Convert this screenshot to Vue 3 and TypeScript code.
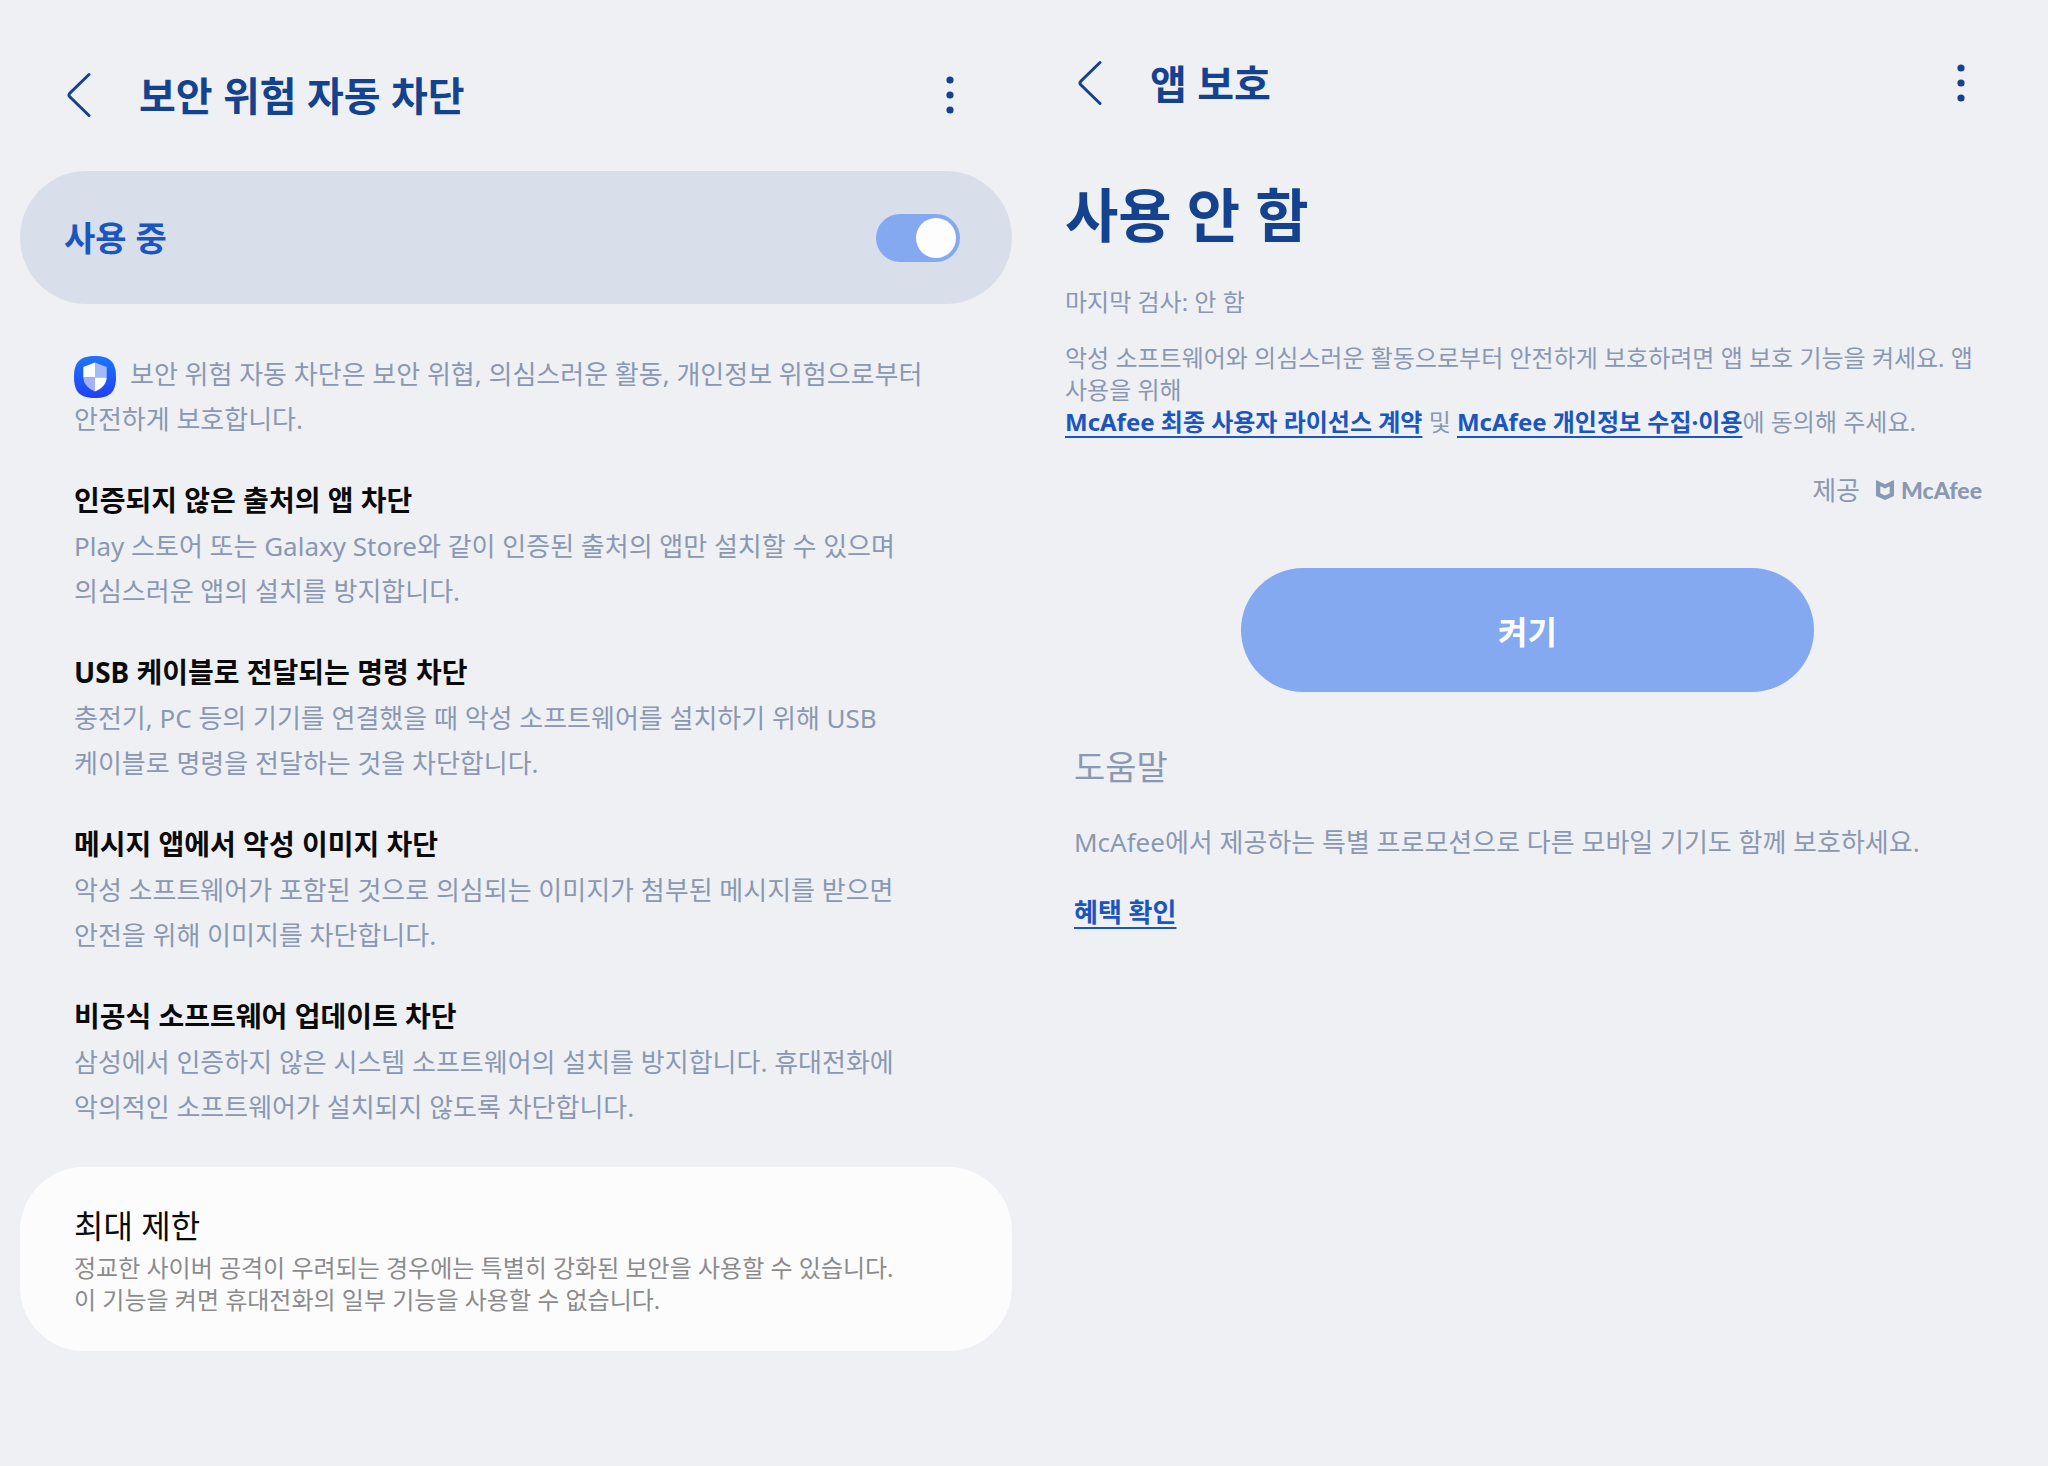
<script setup lang="ts">
import { ref } from 'vue'

interface Rule {
  title: string
  text: string
}

const autoBlock = ref<boolean>(true)

const rules: Rule[] = [
  {
    title: '인증되지 않은 출처의 앱 차단',
    text: 'Play 스토어 또는 Galaxy Store와 같이 인증된 출처의 앱만 설치할 수 있으며 의심스러운 앱의 설치를 방지합니다.',
  },
  {
    title: 'USB 케이블로 전달되는 명령 차단',
    text: '충전기, PC 등의 기기를 연결했을 때 악성 소프트웨어를 설치하기 위해 USB 케이블로 명령을 전달하는 것을 차단합니다.',
  },
  {
    title: '메시지 앱에서 악성 이미지 차단',
    text: '악성 소프트웨어가 포함된 것으로 의심되는 이미지가 첨부된 메시지를 받으면 안전을 위해 이미지를 차단합니다.',
  },
  {
    title: '비공식 소프트웨어 업데이트 차단',
    text: '삼성에서 인증하지 않은 시스템 소프트웨어의 설치를 방지합니다. 휴대전화에 악의적인 소프트웨어가 설치되지 않도록 차단합니다.',
  },
]
</script>

<template>
  <main class="screens">
    <section class="pane blocker">
      <header class="bar">
        <button class="icon-button" type="button" aria-label="뒤로">
          <svg width="24" height="48" viewBox="0 0 24 48">
            <path d="M22 2.500 2.800 21.200Q1.200 23 2.800 24.800L22 43.500" />
          </svg>
        </button>
        <h1>보안 위험 자동 차단</h1>
        <button class="icon-button more" type="button" aria-label="더보기">
          <svg width="8" height="40" viewBox="0 0 8 40">
            <circle cx="4" cy="4" r="3.600" />
            <circle cx="4" cy="19" r="3.600" />
            <circle cx="4" cy="34" r="3.600" />
          </svg>
        </button>
      </header>

      <label class="switch-row">
        <span>사용 중</span>
        <input v-model="autoBlock" type="checkbox" role="switch" />
      </label>

      <div class="details">
        <p class="intro">
          <svg class="shield" width="42" height="42" viewBox="0 0 42 42" aria-hidden="true">
            <defs>
              <linearGradient id="shield-tile" x1="0" y1="0" x2="0" y2="1">
                <stop offset="0" stop-color="#1c76fb" />
                <stop offset="1" stop-color="#2140f4" />
              </linearGradient>
            </defs>
            <path
              d="M21 0C36 0 42 6 42 21S36 42 21 42 0 36 0 21 6 0 21 0Z"
              fill="url(#shield-tile)"
            />
            <path d="M21 6.500 9.300 11v10.500H21Z" fill="#fff" />
            <path d="M21 6.500 32.700 11v10.500H21Z" fill="#a3bafa" />
            <path d="M9.300 21.500H21v14C14 32.500 9.600 28 9.300 21.500Z" fill="#a3b2fb" />
            <path d="M32.700 21.500H21v14C28 32.500 32.400 28 32.700 21.500Z" fill="#fff" />
          </svg>보안 위험 자동 차단은 보안 위협, 의심스러운 활동, 개인정보 위험으로부터 안전하게 보호합니다.
        </p>

        <article v-for="rule in rules" :key="rule.title" class="rule">
          <h2>{{ rule.title }}</h2>
          <p>{{ rule.text }}</p>
        </article>
      </div>

      <section class="limit-card">
        <h2>최대 제한</h2>
        <p>
          정교한 사이버 공격이 우려되는 경우에는 특별히 강화된 보안을 사용할 수 있습니다.<br />
          이 기능을 켜면 휴대전화의 일부 기능을 사용할 수 없습니다.
        </p>
      </section>
    </section>

    <section class="pane protection">
      <header class="bar">
        <button class="icon-button" type="button" aria-label="뒤로">
          <svg width="24" height="48" viewBox="0 0 24 48">
            <path d="M22 2.500 2.800 21.200Q1.200 23 2.800 24.800L22 43.500" />
          </svg>
        </button>
        <h1>앱 보호</h1>
        <button class="icon-button more" type="button" aria-label="더보기">
          <svg width="8" height="40" viewBox="0 0 8 40">
            <circle cx="4" cy="4" r="3.600" />
            <circle cx="4" cy="19" r="3.600" />
            <circle cx="4" cy="34" r="3.600" />
          </svg>
        </button>
      </header>

      <h2 class="status">사용 안 함</h2>
      <p class="small last-scan">마지막 검사: 안 함</p>
      <p class="small">
        악성 소프트웨어와 의심스러운 활동으로부터 안전하게 보호하려면 앱 보호 기능을 켜세요. 앱 사용을 위해<br />
        <a href="#license">McAfee 최종 사용자 라이선스 계약</a> 및
        <a href="#privacy">McAfee 개인정보 수집·이용</a>에 동의해 주세요.
      </p>

      <div class="provider">
        <span>제공</span>
        <span class="mcafee">
          <svg width="18" height="20" viewBox="0 0 18 20" aria-hidden="true">
            <path
              d="M0 0 9 4.200 18 0V16L9 20 0 16ZM4.300 6.300V13.300L9 15.500 13.700 13.300V6.300L9 8.500Z"
              fill-rule="evenodd"
            />
          </svg>
          <span class="wordmark">McAfee</span>
        </span>
      </div>

      <button class="turn-on" type="button">켜기</button>

      <div class="help">
        <h3>도움말</h3>
        <p>McAfee에서 제공하는 특별 프로모션으로 다른 모바일 기기도 함께 보호하세요.</p>
        <a href="#benefit">혜택 확인</a>
      </div>
    </section>
  </main>
</template>

<style>
body {
  margin: 0;
  background: #eef0f4;
}
</style>

<style scoped>
.screens {
  display: grid;
  grid-template-columns: 1fr 1fr;
  box-sizing: border-box;
  min-height: 100vh;
  background: #eef0f4;
  color: #8a98b1;
  font-family: 'Noto Sans', 'Noto Sans CJK KR', sans-serif;
  word-break: keep-all;
}

h1,
h2,
h3,
p {
  margin: 0;
}

.pane {
  min-width: 0;
}

.blocker {
  padding: 48px 12px 48px 20px;
}

.protection {
  padding: 36px 58px 48px 41px;
}

.bar {
  display: flex;
  align-items: center;
  height: 96px;
  color: #14428f;
}

.bar h1 {
  flex: 1;
  font-size: 40px;
  line-height: 56px;
  font-weight: 700;
}

.blocker .bar {
  padding: 0 58px 0 47px;
}

.protection .bar {
  padding: 0 25px 0 13px;
}

.icon-button {
  display: flex;
  padding: 0;
  border: 0;
  background: none;
  color: inherit;
  margin-right: 48px;
}

.icon-button path {
  fill: none;
  stroke: currentColor;
  stroke-width: 3;
  stroke-linecap: round;
}

.icon-button circle {
  fill: currentColor;
}

.icon-button.more {
  margin-right: 0;
}

.switch-row {
  display: flex;
  align-items: center;
  justify-content: space-between;
  height: 133px;
  margin-top: 27px;
  padding: 0 52px 0 44px;
  border-radius: 67px;
  background: #d9dfea;
  box-sizing: border-box;
  color: #1a55c0;
  font-size: 34px;
  line-height: 48px;
  font-weight: 700;
}

.switch-row input {
  display: flex;
  align-items: center;
  appearance: none;
  width: 84px;
  height: 48px;
  margin: 0;
  padding: 0 4px;
  box-sizing: border-box;
  border-radius: 24px;
  background: #b5bcc9;
}

.switch-row input::before {
  content: '';
  width: 40px;
  height: 40px;
  border-radius: 50%;
  background: #fdfdfd;
}

.switch-row input:checked {
  justify-content: flex-end;
  background: #84a9f0;
}

.details {
  display: flex;
  flex-direction: column;
  gap: 34px;
  margin-top: 48px;
  padding: 0 62px 0 54px;
  font-size: 26px;
  line-height: 45px;
}

.shield {
  height: 42px;
  margin: -6px 14px -6px 0;
  vertical-align: -8px;
}

.rule h2 {
  color: #0a0a0a;
  font-size: 28px;
  line-height: 48px;
  font-weight: 700;
}

.limit-card {
  margin-top: 37px;
  padding: 36px 54px 35px;
  border-radius: 64px;
  background: #fcfcfc;
  color: #8b8b8d;
  font-size: 24px;
  line-height: 32px;
}

.limit-card h2 {
  margin-bottom: 3px;
  color: #0a0a0a;
  font-size: 32px;
  line-height: 46px;
  font-weight: 400;
}

.status {
  margin-top: 43px;
  color: #14428f;
  font-size: 58px;
  line-height: 80px;
  font-weight: 700;
}

.small {
  font-size: 24px;
  line-height: 32px;
}

.last-scan {
  margin: 31px 0 24px;
}

a {
  color: #1a55c0;
  font-weight: 700;
  text-decoration: underline;
  text-decoration-thickness: 2px;
  text-underline-offset: 5px;
}

.provider {
  display: flex;
  align-items: center;
  justify-content: flex-end;
  gap: 16px;
  margin-top: 32px;
  padding-right: 8px;
  font-size: 26px;
  line-height: 40px;
}

.mcafee {
  display: flex;
  align-items: center;
  gap: 7px;
}

.mcafee path {
  fill: currentColor;
}

.wordmark {
  font-family: Lato, sans-serif;
  font-size: 23px;
  line-height: 24px;
  font-weight: 900;
}

.turn-on {
  display: block;
  width: 62%;
  height: 124px;
  margin: 58px auto 0;
  border: 0;
  border-radius: 62px;
  background: #84a9f0;
  color: #fff;
  font-family: inherit;
  font-size: 32px;
  font-weight: 700;
}

.help {
  margin-top: 51px;
  padding-left: 9px;
  font-size: 26px;
  line-height: 36px;
}

.help h3 {
  font-size: 34px;
  line-height: 48px;
  font-weight: 400;
}

.help p {
  margin: 33px 0 34px;
}
</style>
